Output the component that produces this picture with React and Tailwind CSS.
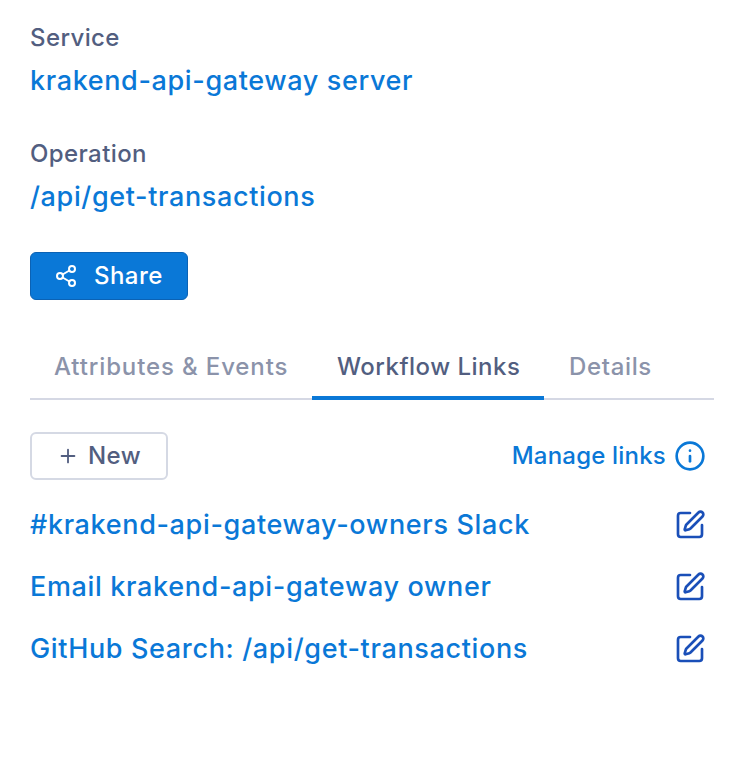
import React from "react";
import { Share2, Plus, Info, SquarePen } from "lucide-react";

const links = [
  "#krakend-api-gateway-owners Slack",
  "Email krakend-api-gateway owner",
  "GitHub Search: /api/get-transactions",
];

const Field = ({ label, value }) => (
  <div className="mb-[35px]">
    <div className="text-[24px] leading-[36px] font-medium tracking-[0.4px] text-[#525e80]">{label}</div>
    <div className="mt-[5px] text-[27px] leading-[40px] font-medium tracking-[0.63px] text-[#0a78d7]">{value}</div>
  </div>
);

export default function App() {
  return (
    <div className="w-[746px] h-[760px] bg-white px-[30px] pt-[20px] font-['Inter',sans-serif]">
      <Field label="Service" value="krakend-api-gateway server" />
      <Field label="Operation" value="/api/get-transactions" />
      <button className="flex items-center gap-[16px] w-[158px] h-[48px] pl-[23px] rounded-[6px] bg-[#0a78d7] border border-[#0b62b4] text-white text-[24px] font-medium tracking-[0.45px]">
        <Share2 size={24} strokeWidth={2} />
        Share
      </button>
      <div className="flex mt-[28px] w-[684px] border-b-2 border-[#d5d8e4] text-[24px] font-medium">
        <div className="w-[282px] pl-[24px] pt-[6px] h-[72px] leading-[66px] -mb-[2px] tracking-[0.87px] text-[#8b93aa]">Attributes &amp; Events</div>
        <div className="w-[232px] pl-[25px] pt-[6px] h-[72px] leading-[66px] -mb-[2px] border-b-4 border-[#0a78d7] tracking-[0.5px] text-[#525e80]">Workflow Links</div>
        <div className="pl-[25px] pt-[6px] h-[72px] leading-[66px] -mb-[2px] tracking-[0.65px] text-[#8b93aa]">Details</div>
      </div>
      <div className="flex items-center justify-between w-[684px] mt-[32px]">
        <button className="flex items-center gap-[9px] w-[138px] h-[48px] pl-[25px] rounded-[6px] border-2 border-[#d5d9e4] text-[#525e80] text-[24px] font-medium tracking-[0.4px]">
          <Plus size={22} strokeWidth={2} />
          New
        </button>
        <div className="flex items-center gap-[8px] pr-[8px] text-[24px] font-medium tracking-[0.2px] text-[#0a78d7]">
          Manage links
          <Info size={32} strokeWidth={2} />
        </div>
      </div>
      <div className="w-[684px] mt-[14px]">
        {links.map((link) => (
          <div key={link} className="flex items-center justify-between h-[62px] pr-[8px]">
            <span className="text-[27px] font-medium tracking-[0.65px] text-[#0a78d7]">{link}</span>
            <SquarePen size={32} strokeWidth={2} className="text-[#1a4fb8]" />
          </div>
        ))}
      </div>
    </div>
  );
}
